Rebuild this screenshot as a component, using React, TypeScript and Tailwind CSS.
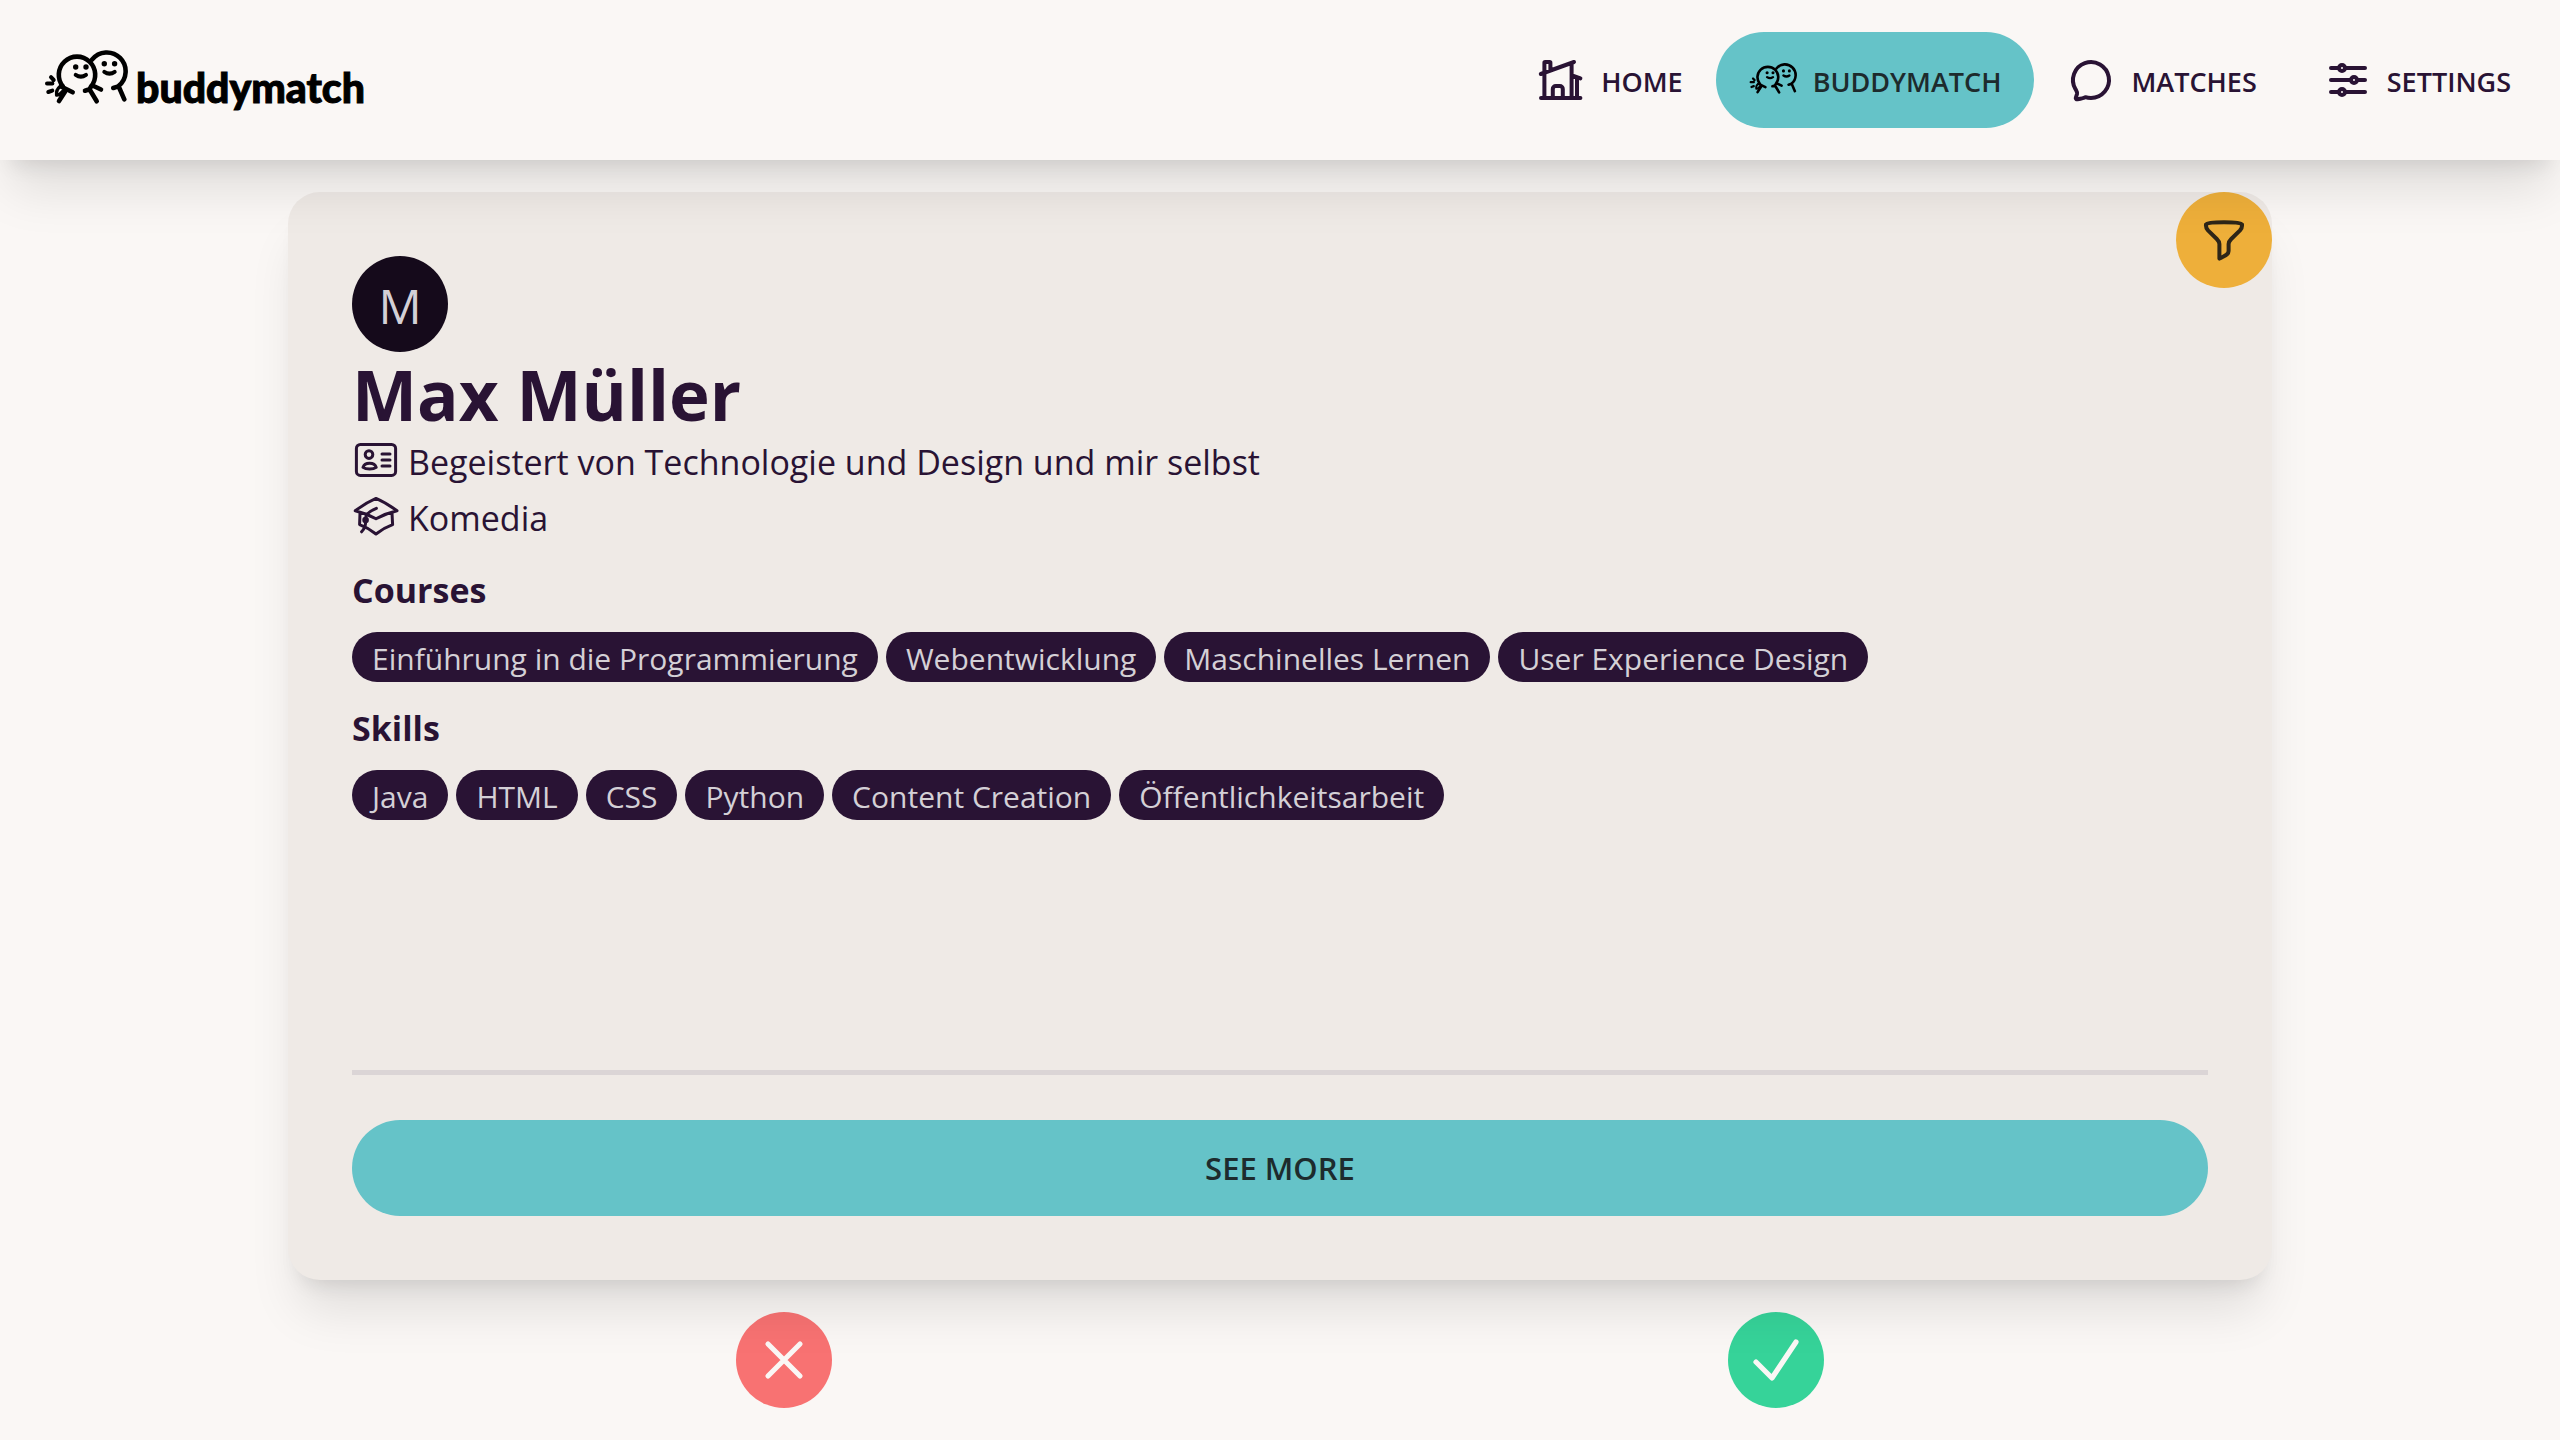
import type { ReactNode } from "react";

function Buddies({ className }: { className: string }) {
  return (
    <svg viewBox="0 0 84 60" className={className} fill="none" stroke="currentColor" strokeWidth="4.6" strokeLinecap="round" strokeLinejoin="round" aria-hidden="true">
      <path d="M19 36.5A18.200 18.200 0 1 1 47 36.500L45.500 39.300L52.700 51.300M41 40.700l4.500-1.400M48.500 35.500l8.500 4" />
      <path d="M48 9.700A18.800 18.800 0 1 1 74.500 36L80.300 49.300M69.300 38l5-1.600" />
      <path d="M17 36.500l11.700 5.800M21 41.700L15 51" />
      <path d="M16 36.500c-2.500 2-3.800 5-3.400 8.500l3-.5 4-4" strokeWidth="3.4" />
      <path d="M7 27.200l2.700 2.800M3 33.500h5.400M4.300 42l4-1.400" strokeWidth="4" />
      <path d="M31.700 24.800q5.200 3.600 10.300 0M60.300 21.800q5.200 3.600 10.400 0" strokeWidth="4" />
      <g fill="currentColor" stroke="none">
        <circle cx="31.700" cy="17" r="2.700" />
        <circle cx="42" cy="17" r="2.700" />
        <circle cx="60.300" cy="13.800" r="2.700" />
        <circle cx="70.600" cy="13.800" r="2.700" />
      </g>
    </svg>
  );
}

function Icon({ children, width = 1.5 }: { children: ReactNode; width?: number }) {
  return (
    <svg viewBox="0 0 24 24" className="size-12 shrink-0" fill="none" stroke="currentColor" strokeWidth={width} strokeLinecap="round" strokeLinejoin="round" aria-hidden="true">
      {children}
    </svg>
  );
}

const navItems = [
  {
    label: "HOME",
    active: false,
    icon: (
      <Icon width={2}>
        <path d="M2 21h19.700M3.700 21V8.500M1.900 9L18.500 3M17.300 3.500V21M20 11V21M17.500 9.700l4.200 1.500M3.700 8V3.400a.4.4 0 0 1 .4-.4h2.200a.4.4 0 0 1 .4.4V7M7.900 21v-4.500a1.500 1.500 0 0 1 1.500-1.500h2a1.500 1.500 0 0 1 1.500 1.500V21" />
      </Icon>
    ),
  },
  { label: "BUDDYMATCH", active: true, icon: <Buddies className="w-12 shrink-0 text-black" /> },
  {
    label: "MATCHES",
    active: false,
    icon: (
      <Icon width={2}>
        <path d="M12 21A9 9 0 1 0 4.200 16.500C4.700 17.400 5.200 18 5 19L4.400 20.900C4.200 21.500 4.700 21.700 5.300 21.600C7 21.400 8.300 21.200 9.200 20.600C10.100 20.900 11 21 12 21Z" />
      </Icon>
    ),
  },
  {
    label: "SETTINGS",
    active: false,
    icon: (
      <Icon width={2}>
        <path d="M4 6h4M11 6h10M4 12h10M17 12h4M4 18h4M11 18h10" />
        <circle cx="9.500" cy="6" r="1.500" />
        <circle cx="15.500" cy="12" r="1.500" />
        <circle cx="9.500" cy="18" r="1.500" />
      </Icon>
    ),
  },
];

const courses = ["Einführung in die Programmierung", "Webentwicklung", "Maschinelles Lernen", "User Experience Design"];
const skills = ["Java", "HTML", "CSS", "Python", "Content Creation", "Öffentlichkeitsarbeit"];

function Tags({ title, items }: { title: string; items: string[] }) {
  return (
    <section className="mt-4">
      <h2 className="pt-1 text-[34px] leading-13 font-bold">{title}</h2>
      <ul className="mt-4 flex flex-wrap gap-2">
        {items.map((item) => (
          <li key={item} className="rounded-full bg-[#291334] px-5 pt-1 text-[30px] leading-[46px] text-[#d4d0d6]">
            {item}
          </li>
        ))}
      </ul>
    </section>
  );
}

export default function App() {
  return (
    <div className="flex min-h-screen flex-col bg-[#faf7f5] font-['Open_Sans',sans-serif] text-[#291334]">
      <header className="relative z-20 flex h-40 items-center justify-between bg-[#faf7f5] pr-4 pl-11 shadow-[0_40px_50px_-10px_rgb(0_0_0/0.1),0_16px_20px_-12px_rgb(0_0_0/0.1)]">
        <a href="#" className="flex items-center gap-2 text-black">
          <Buddies className="w-21" />
          <span className="pt-4 font-['Lato',sans-serif] text-[41px] leading-12 font-black [-webkit-text-stroke:1px_black]">buddymatch</span>
        </a>
        <nav className="flex">
          {navItems.map((item) => (
            <a
              key={item.label}
              href="#"
              className={
                item.active
                  ? "flex h-24 items-center gap-4 rounded-full bg-[#65c3c8] px-[33px] text-[27px] font-semibold text-[#1d2b2d]"
                  : "flex h-24 items-center gap-4 rounded-full px-[33px] text-[27px] font-semibold"
              }
            >
              {item.icon}
              <span className="pt-1">{item.label}</span>
            </a>
          ))}
        </nav>
      </header>

      <main className="flex grow flex-col gap-8 px-72 py-8">
        <article className="relative z-10 flex grow flex-col rounded-[32px] bg-[#efeae6] p-16 shadow-[0_40px_50px_-10px_rgb(0_0_0/0.1),0_16px_20px_-12px_rgb(0_0_0/0.1)]">
          <button aria-label="Filter" className="absolute top-0 right-0 flex size-24 items-center justify-center rounded-full bg-[#eeaf3a] text-[#2e2618]">
            <Icon width={2}>
              <path d="M3 4.200C4 2.700 20 2.700 21 4.200C21.200 5.700 20.800 6.300 20 7.200L15.600 11.500C14.600 12.500 14.300 13 14.300 14V17.500C14.300 19.500 12 20 9.700 21.300V14C9.700 13 9.400 12.500 8.400 11.500L4 7.200C3.200 6.300 2.800 5.700 3 4.200Z" />
            </Icon>
          </button>
          <div className="flex size-24 items-center justify-center rounded-full bg-[#150a1b] pt-1 text-5xl text-[#d4d0d6]">M</div>
          <h1 className="pt-1 text-[69px] leading-19 font-bold">Max Müller</h1>
          <p className="flex items-center gap-2 text-[34px] leading-13">
            <Icon>
              <rect x="2.200" y="4.200" width="19.600" height="15.500" rx="2" />
              <circle cx="8.500" cy="9.300" r="1.900" />
              <path d="M5.500 15.700c.8-2.800 5.800-2.800 6.600 0c-1.500 1.100-5.100 1.100-6.600 0ZM15 9h4M15 12h4M15 15h4" />
            </Icon>
            <span className="pt-1">Begeistert von Technologie und Design und mir selbst</span>
          </p>
          <p className="flex items-center gap-2 text-[34px] leading-13">
            <Icon>
              <path d="M4 10.500L3.800 16.300C7 17.500 9.800 19.200 12 21C14.200 19.200 17 17.500 20.300 16.300L20 10.500M1.600 9.400C5 6.800 8.500 4.700 12 3.200C15.500 4.700 19 6.800 22.500 9.400C19 10.200 15.500 11.500 12 13.400C8.500 11.500 5 10.200 1.600 9.400Z" />
              <path d="M12.200 8.200C9.500 9.300 6.800 10.700 6.800 13v2a7 7 0 0 1-2 4.900" />
              <circle cx="6.800" cy="14" r="0.900" fill="currentColor" />
            </Icon>
            <span className="pt-1">Komedia</span>
          </p>
          <Tags title="Courses" items={courses} />
          <Tags title="Skills" items={skills} />
          <hr className="mt-auto mb-[45px] shrink-0 border-t-[5px] border-[#dbd5d6]" />
          <button className="h-24 shrink-0 rounded-full bg-[#65c3c8] text-[31px] font-semibold text-[#1d2b2d]">SEE MORE</button>
        </article>
        <div className="grid grid-cols-2 justify-items-center">
          <button aria-label="Reject" className="flex size-24 items-center justify-center rounded-full bg-[#f87272] text-[#faf7f5]">
            <Icon width={2.6}>
              <path d="M4 4l16 16M20 4L4 20" />
            </Icon>
          </button>
          <button aria-label="Accept" className="flex size-24 items-center justify-center rounded-full bg-[#36d399] text-[#faf7f5]">
            <Icon width={2.6}>
              <path d="M2 13l8 8L22 3" />
            </Icon>
          </button>
        </div>
      </main>
    </div>
  );
}
